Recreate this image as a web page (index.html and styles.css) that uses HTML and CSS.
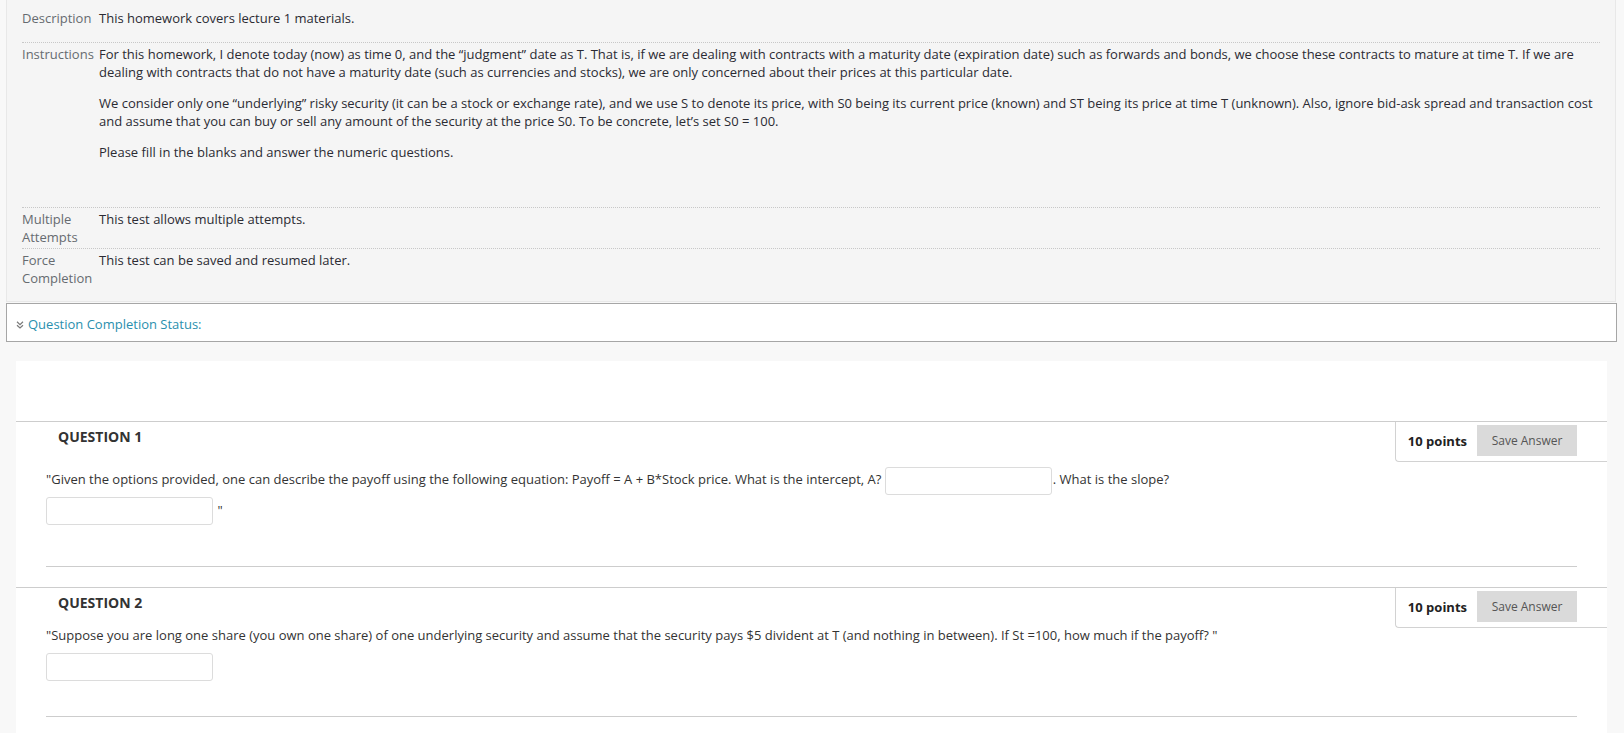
FILE: index.html
```html
<!DOCTYPE html>
<html lang="en">
<head>
<meta charset="utf-8">
<title>Homework</title>
<link rel="stylesheet" href="styles.css">
</head>
<body>
<div class="info-panel">
  <div class="info-row first">
    <div class="info-label">Description</div>
    <div class="info-value"><p>This homework covers lecture 1 materials.</p></div>
  </div>
  <div class="info-row instructions">
    <div class="info-label">Instructions</div>
    <div class="info-value">
      <p>For this homework, I denote today (now) as time 0, and the “judgment” date as T. That is, if we are dealing with contracts with a maturity date (expiration date) such as forwards and bonds, we choose these contracts to mature at time T. If we are dealing with contracts that do not have a maturity date (such as currencies and stocks), we are only concerned about their prices at this particular date.</p>
      <p>We consider only one “underlying” risky security (it can be a stock or exchange rate), and we use S to denote its price, with S0 being its current price (known) and ST being its price at time T (unknown). Also, ignore bid-ask spread and transaction cost and assume that you can buy or sell any amount of the security at the price S0. To be concrete, let’s set S0 = 100.</p>
      <p>Please fill in the blanks and answer the numeric questions.</p>
    </div>
  </div>
  <div class="info-row">
    <div class="info-label">Multiple Attempts</div>
    <div class="info-value">This test allows multiple attempts.</div>
  </div>
  <div class="info-row">
    <div class="info-label">Force Completion</div>
    <div class="info-value">This test can be saved and resumed later.</div>
  </div>
</div>

<div class="status-box">
  <svg class="chev" width="8" height="8" viewBox="0 0 8 8"><path d="M1 0.8 L4 3.6 L7 0.8 M1 4.2 L4 7 L7 4.2" fill="none" stroke="#7a7a7a" stroke-width="1.2"/></svg>
  <span class="status-link">Question Completion Status:</span>
</div>

<div class="card">
  <div class="question">
    <div class="q-head">
      <h3 class="q-title">QUESTION 1</h3>
      <div class="q-points">
        <span class="pts">10 points</span>
        <button class="save-btn">Save Answer</button>
      </div>
    </div>
    <div class="q-body">
      <p class="q-text">"Given the options provided, one can describe the payoff using the following equation: Payoff = A + B*Stock price. What is the intercept, A? <input class="blank" type="text">. What is the slope?<br><input class="blank" type="text"> "</p>
    </div>
  </div>
  <div class="question q2">
    <div class="q-head">
      <h3 class="q-title">QUESTION 2</h3>
      <div class="q-points">
        <span class="pts">10 points</span>
        <button class="save-btn">Save Answer</button>
      </div>
    </div>
    <div class="q-body">
      <p class="q-text">"Suppose you are long one share (you own one share) of one underlying security and assume that the security pays $5 divident at T (and nothing in between). If St =100, how much if the payoff? "</p>
      <div class="blank-row"><input class="blank" type="text"></div>
    </div>
  </div>
</div>
</body>
</html>
```

FILE: styles.css
```css
html, body {
  margin: 0;
  padding: 0;
}
body {
  background: #f8f8f8;
  font-family: "Open Sans", "Noto Sans", "DejaVu Sans", sans-serif;
  font-size: 13px;
  line-height: 18px;
  color: #333;
  overflow: hidden;
}

.info-panel {
  margin: 0 8px 0 6px;
  background: #f5f5f5;
  border: 1px solid #e8e8e8;
  border-top: none;
  padding: 7px 0 12px;
}
.info-row {
  display: grid;
  grid-template-columns: 77px 1fr;
  margin: 0 15px;
  padding: 2px 0;
  border-top: 1px dotted #c8c8c8;
}
.info-row.first {
  border-top: none;
}
.info-row.instructions {
  padding-bottom: 46px;
}
.info-label {
  color: #666b70;
}
.info-value {
  color: #2b2b33;
}
.info-value p {
  margin: 0 0 13px;
}
.instructions .info-value p:last-child {
  margin-bottom: 0;
}

.status-box {
  margin: 1px 7px 0 6px;
  border: 1px solid #a6a6a6;
  background: #fff;
  padding: 11px 9px 8px;
  display: flex;
  align-items: center;
  gap: 4px;
}
.chev {
  flex: none;
  margin-top: 1px;
}
.status-link {
  color: #2a8fae;
}

.card {
  margin: 19px 17px 0 16px;
  background: #fff;
  padding: 60px 0 16px;
}
.question {
  border-top: 1px solid #cdcdcd;
}
.q2 {
  margin-top: 20px;
}
.q-head {
  display: flex;
  justify-content: space-between;
  align-items: flex-start;
}
.q-title {
  margin: 0;
  padding: 6px 0 0 42px;
  font-size: 14px;
  line-height: 18px;
  font-weight: 700;
  color: #333;
}
.q-points {
  display: flex;
  align-items: center;
  gap: 10px;
  padding: 3px 30px 5px 12px;
  border-left: 1px solid #d2d2d2;
  border-bottom: 1px solid #d2d2d2;
  border-bottom-left-radius: 4px;
}
.pts {
  font-weight: 700;
  color: #222;
}
.save-btn {
  width: 100px;
  height: 31px;
  border: none;
  background: #dadada;
  color: #555;
  font-family: "Open Sans", "Noto Sans", sans-serif;
  font-size: 12px;
  padding: 0;
}
.q-body {
  margin: 0 30px;
  padding: 2px 0 41px;
  border-bottom: 1px solid #cdcdcd;
}
.q2 .q-body {
  padding-top: 0;
  padding-bottom: 35px;
}
.q-text {
  margin: 0;
  line-height: 30px;
}
.q2 .q-text {
  line-height: 18px;
  margin-top: -2px;
}
.blank {
  box-sizing: border-box;
  width: 167px;
  height: 28px;
  border: 1px solid #dcdcdc;
  border-radius: 3px;
  background: #fff;
  vertical-align: middle;
  margin: 0 1px 0 0;
  padding: 0;
}
.blank-row {
  margin-top: 9px;
}
.blank-row .blank {
  display: block;
}
```
